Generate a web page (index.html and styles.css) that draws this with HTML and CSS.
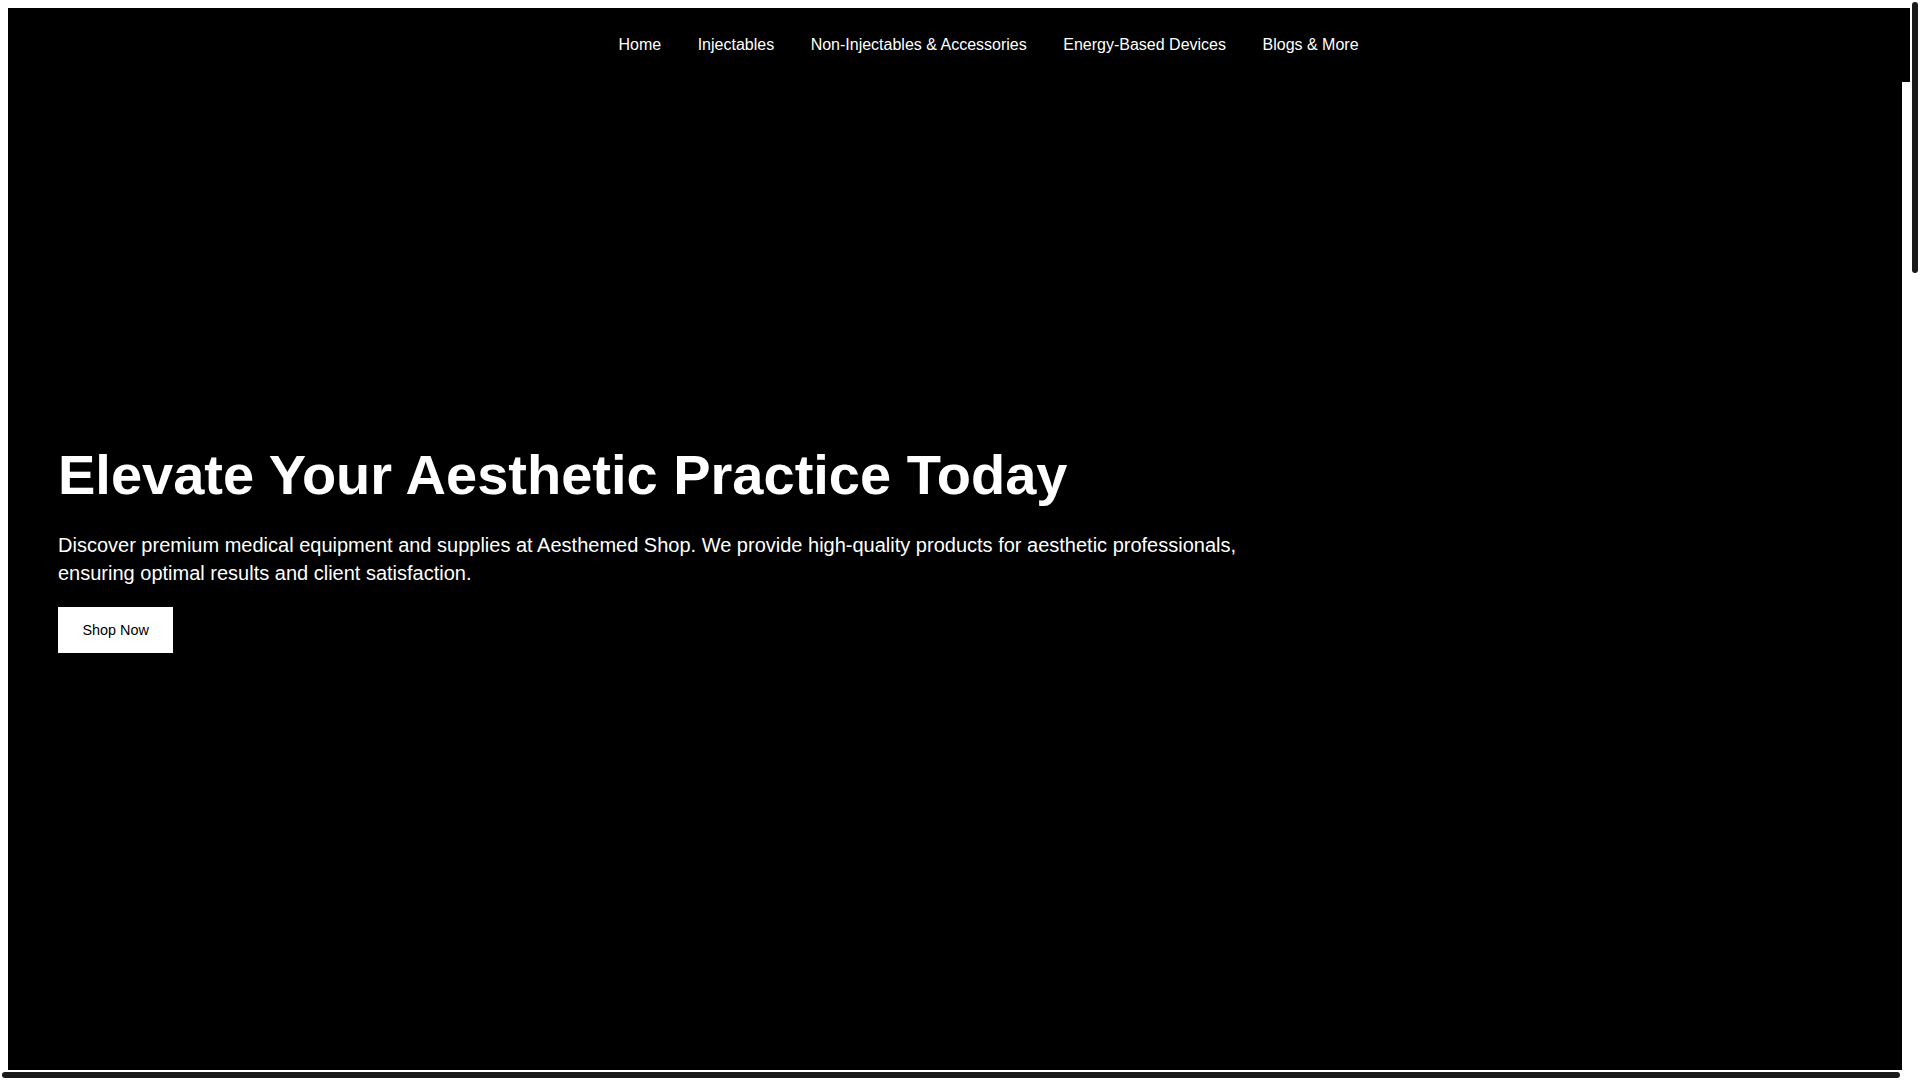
FILE: index.html
```html
<!DOCTYPE html>
<html lang="en">
<head>
<meta charset="utf-8">
<title>Aesthemed Shop</title>
<link rel="stylesheet" href="styles.css">
</head>
<body>
<header class="site-header">
  <nav class="main-nav">
    <a href="#" class="nav-link">Home</a>
    <a href="#" class="nav-link">Injectables</a>
    <a href="#" class="nav-link">Non-Injectables &amp; Accessories</a>
    <a href="#" class="nav-link">Energy-Based Devices</a>
    <a href="#" class="nav-link">Blogs &amp; More</a>
  </nav>
</header>
<main class="page">
  <section class="hero">
    <h1 class="hero-title">Elevate Your Aesthetic Practice Today</h1>
    <p class="hero-text">Discover premium medical equipment and supplies at Aesthemed Shop. We provide high-quality products for aesthetic professionals, ensuring optimal results and client satisfaction.</p>
    <div class="hero-actions"><a href="#" class="btn">Shop Now</a></div>
  </section>
</main>
<div class="scrollbar-v"><div class="thumb-v"></div></div>
<div class="scrollbar-h"><div class="thumb-h"></div></div>
</body>
</html>
```
FILE: styles.css
```css
html {
  background: #fff;
  height: 100%;
  overflow: hidden;
}
body {
  margin: 8px 18px 8px 8px;
  background: #fff;
  font-family: "Liberation Sans", Arial, sans-serif;
  color: #fff;
}
.site-header {
  position: absolute;
  top: 8px;
  left: 8px;
  width: 100vw;
  box-sizing: border-box;
  padding: 28px 0 28px 41px;
  background: #000;
  display: flex;
  justify-content: center;
  z-index: 2;
}
.main-nav {
  display: flex;
  gap: 36.5px;
}
.nav-link {
  color: #fff;
  text-decoration: none;
  font-size: 16px;
  line-height: 18px;
}
.page {
  background: #000;
}
.hero {
  min-height: calc(100vh - 2px);
  box-sizing: border-box;
  padding: 0 50px;
  display: flex;
  flex-direction: column;
  justify-content: center;
  background: #000;
}
.hero-title {
  margin: 0 0 22px;
  font-size: 56px;
  line-height: 1.2;
  font-weight: 700;
  color: #fff;
}
.hero-text {
  margin: 0 0 20px;
  max-width: 1200px;
  font-size: 20px;
  line-height: 28px;
  color: #fff;
}
.hero-actions {
  display: flex;
}
.btn {
  display: inline-block;
  background: #fff;
  color: #000;
  text-decoration: none;
  font-size: 14.4px;
  line-height: 16px;
  padding: 15px 24.5px;
}
.scrollbar-v {
  position: fixed;
  top: 0;
  right: 0;
  width: 10px;
  height: 100%;
  background: #fff;
  z-index: 5;
}
.thumb-v {
  margin: 2px;
  height: 271px;
  background: #1a1a1a;
  border-radius: 3px;
}
.scrollbar-h {
  position: fixed;
  left: 0;
  bottom: 0;
  width: 1910px;
  height: 10px;
  background: #fff;
  z-index: 5;
}
.thumb-h {
  margin: 2px;
  width: 1898px;
  height: 6px;
  background: #1a1a1a;
  border-radius: 3px;
}
```
